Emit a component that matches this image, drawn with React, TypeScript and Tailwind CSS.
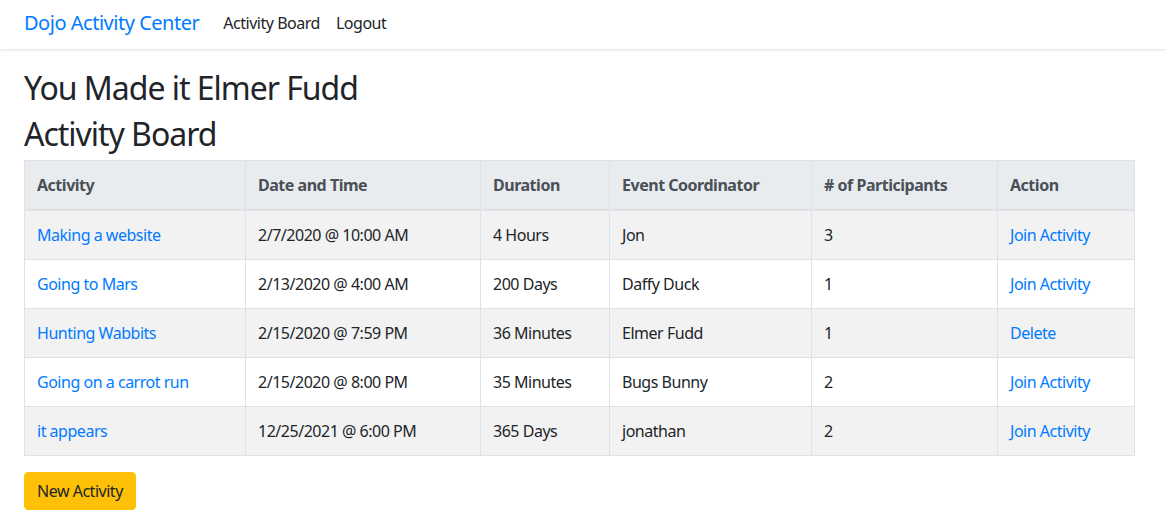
import React from 'react';

type Row = {
  activity: string;
  date: string;
  duration: string;
  coordinator: string;
  participants: number;
  action: string;
};

const rows: Row[] = [
  { activity: 'Making a website', date: '2/7/2020 @ 10:00 AM', duration: '4 Hours', coordinator: 'Jon', participants: 3, action: 'Join Activity' },
  { activity: 'Going to Mars', date: '2/13/2020 @ 4:00 AM', duration: '200 Days', coordinator: 'Daffy Duck', participants: 1, action: 'Join Activity' },
  { activity: 'Hunting Wabbits', date: '2/15/2020 @ 7:59 PM', duration: '36 Minutes', coordinator: 'Elmer Fudd', participants: 1, action: 'Delete' },
  { activity: 'Going on a carrot run', date: '2/15/2020 @ 8:00 PM', duration: '35 Minutes', coordinator: 'Bugs Bunny', participants: 2, action: 'Join Activity' },
  { activity: 'it appears', date: '12/25/2021 @ 6:00 PM', duration: '365 Days', coordinator: 'jonathan', participants: 2, action: 'Join Activity' },
];

const headers = ['Activity', 'Date and Time', 'Duration', 'Event Coordinator', '# of Participants', 'Action'];
const colWidths = ['w-[221px]', 'w-[235px]', 'w-[129px]', 'w-[202px]', 'w-[186px]', 'w-[137px]'];

export default function App() {
  return (
    <div className="min-h-[530px] bg-white text-[#212529] text-base tracking-[-0.03em]" style={{ fontFamily: '"Noto Sans", "Open Sans", sans-serif' }}>
      {/* navbar */}
      <nav className="h-[49px] flex items-center px-6 pb-[3px] bg-white shadow-[0_1px_3px_rgba(0,0,0,0.12)]">
        <a className="text-[20px] text-[#007bff] mr-6">Dojo Activity Center</a>
        <a className="text-[#212529] mr-4">Activity Board</a>
        <a className="text-[#212529]">Logout</a>
      </nav>

      <div className="px-6 pt-[20px]">
        <h2 className="text-[32px] leading-[1.2] font-normal tracking-[-0.032em] mb-2">You Made it Elmer Fudd</h2>
        <h2 className="text-[32px] leading-[1.2] font-normal tracking-[-0.032em] mb-[6px]">Activity Board</h2>

        <table className="w-[1110px] table-fixed border-collapse mb-4">
          <colgroup>
            {colWidths.map((w, i) => (
              <col key={i} className={w} />
            ))}
          </colgroup>
          <thead>
            <tr className="bg-[#e9ecef]">
              {headers.map(h => (
                <th key={h} className="text-left font-bold text-[#495057] px-3 py-3 leading-6 border border-[#dee2e6] border-b-2">
                  {h}
                </th>
              ))}
            </tr>
          </thead>
          <tbody>
            {rows.map((r, i) => (
              <tr key={r.activity} className={i % 2 === 0 ? 'bg-[#f2f2f2]' : 'bg-white'}>
                <td className="px-3 py-3 leading-6 border border-[#dee2e6] text-[#007bff]">{r.activity}</td>
                <td className="px-3 py-3 leading-6 border border-[#dee2e6]">{r.date}</td>
                <td className="px-3 py-3 leading-6 border border-[#dee2e6]">{r.duration}</td>
                <td className="px-3 py-3 leading-6 border border-[#dee2e6]">{r.coordinator}</td>
                <td className="px-3 py-3 leading-6 border border-[#dee2e6]">{r.participants}</td>
                <td className="px-3 py-3 leading-6 border border-[#dee2e6] text-[#007bff]">{r.action}</td>
              </tr>
            ))}
          </tbody>
        </table>

        <button className="bg-[#ffc107] border border-[#ffc107] text-[#212529] rounded px-3 py-1.5 leading-6">
          New Activity
        </button>
      </div>
    </div>
  );
}
